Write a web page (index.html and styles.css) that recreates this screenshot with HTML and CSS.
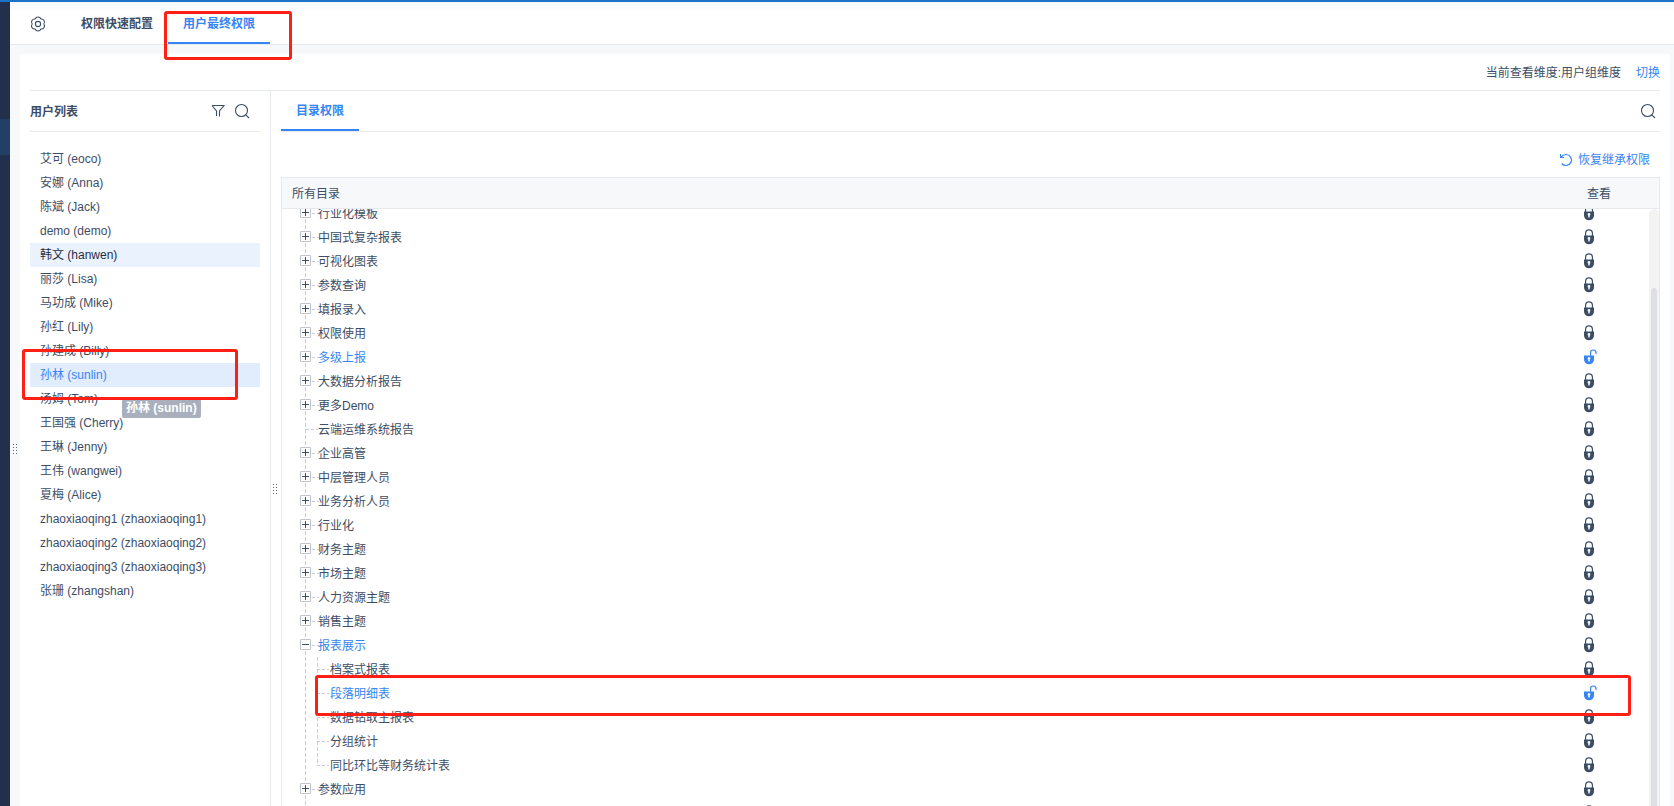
FILE: index.html
```
<!DOCTYPE html>
<html lang="zh-CN">
<head>
    <meta charset="utf-8">
    <title>用户最终权限</title>
    <link rel="stylesheet" href="styles.css">
</head>
<body>
    <svg class="symbols" aria-hidden="true">
        <symbol id="lock" viewBox="0 0 14 16">
            <path d="M3.600 8V4.200a3.400 3.400 0 0 1 6.800 0V8" fill="none" stroke="currentColor" stroke-width="1.200"/>
            <path fill="currentColor" fill-rule="evenodd" d="M2 6.500h10V10.500a5 4.800 0 0 1-10 0zM7 8a1.400 1.400 0 0 0-.7 2.600V12.500h1.400v-1.900A1.400 1.400 0 0 0 7 8z"/>
        </symbol>
        <symbol id="unlock" viewBox="0 0 15 16">
            <path d="M8.600 7V3.700a2.700 2.700 0 0 1 5.400 0V5" fill="none" stroke="currentColor" stroke-width="1.200"/>
            <path fill="currentColor" fill-rule="evenodd" d="M2 6.500h10V10.500a5 4.800 0 0 1-10 0zM7 8a1.400 1.400 0 0 0-.7 2.600V12.500h1.400v-1.900A1.400 1.400 0 0 0 7 8z"/>
        </symbol>
        <symbol id="search" viewBox="0 0 16 16">
            <circle cx="7.500" cy="7.500" r="6" fill="none" stroke="currentColor" stroke-width="1.100"/>
            <path d="M11.800 11.800L15 15" stroke="currentColor" stroke-width="1.100"/>
        </symbol>
        <symbol id="plus" viewBox="0 0 11 11">
            <path d="M.5 .5h10v10h-10z" fill="#fff" stroke="#c0c5ce"/>
            <path d="M2 5.500h7M5.500 2v7" stroke="#3d4d66"/>
        </symbol>
        <symbol id="minus" viewBox="0 0 11 11">
            <path d="M.5 .5h10v10h-10z" fill="#fff" stroke="#c0c5ce"/>
            <path d="M2 5.500h7" stroke="#3d4d66"/>
        </symbol>
        <symbol id="grip" viewBox="0 0 4 12">
            <path d="M.5 0v12M3.500 0v12" stroke="#5c6780" stroke-dasharray="1 2"/>
        </symbol>
    </svg>

    <div class="topline"></div>
    <div class="app">
        <aside class="rail"><div class="rail-active"></div></aside>
        <div class="workspace">
            <header class="header">
                <button class="icon-btn gear" aria-label="设置">
                    <svg viewBox="0 0 16 16" width="16" height="16" fill="none" stroke="currentColor" stroke-width="1.100">
                        <path d="M5.100 3A3.100 3.100 0 0 1 10.900 3A3.100 3.100 0 0 1 13.800 8A3.100 3.100 0 0 1 10.900 13A3.100 3.100 0 0 1 5.100 13A3.100 3.100 0 0 1 2.200 8A3.100 3.100 0 0 1 5.100 3z"/>
                        <circle cx="8" cy="8" r="2.600"/>
                    </svg>
                </button>
                <nav class="tabs">
                    <button class="tab">权限快速配置</button>
                    <button class="tab active">用户最终权限</button>
                    <div class="mark mark-tab"></div>
                </nav>
            </header>
            <div class="body">
                <div class="gutter"><svg class="grip"><use href="#grip"/></svg></div>
                <main class="card">
                    <div class="dimension">
                        <span>当前查看维度:用户组维度</span>
                        <a href="#">切换</a>
                    </div>
                    <div class="panels">
                        <section class="users">
                            <div class="users-head">
                                <h2>用户列表</h2>
                                <button class="icon-btn" aria-label="筛选">
                                    <svg viewBox="0 0 16 16" width="16" height="16" fill="none" stroke="currentColor" stroke-width="1.100"><path d="M2 2.500h12L9.500 8v5.500M2 2.500L6.500 8v5"/></svg>
                                </button>
                                <button class="icon-btn" aria-label="搜索"><svg width="16" height="16"><use href="#search"/></svg></button>
                            </div>
                            <ul class="user-list">
                                <li><button>艾可 (eoco)</button></li>
                                <li><button>安娜 (Anna)</button></li>
                                <li><button>陈斌 (Jack)</button></li>
                                <li><button>demo (demo)</button></li>
                                <li><button class="hover">韩文 (hanwen)</button></li>
                                <li><button>丽莎 (Lisa)</button></li>
                                <li><button>马功成 (Mike)</button></li>
                                <li><button>孙红 (Lily)</button></li>
                                <li><button>孙建成 (Billy)</button></li>
                                <li class="current">
                                    <button class="selected">孙林 (sunlin)</button>
                                    <div class="tooltip">孙林 (sunlin)</div>
                                    <div class="mark mark-user"></div>
                                </li>
                                <li><button>汤姆 (Tom)</button></li>
                                <li><button>王国强 (Cherry)</button></li>
                                <li><button>王琳 (Jenny)</button></li>
                                <li><button>王伟 (wangwei)</button></li>
                                <li><button>夏梅 (Alice)</button></li>
                                <li><button>zhaoxiaoqing1 (zhaoxiaoqing1)</button></li>
                                <li><button>zhaoxiaoqing2 (zhaoxiaoqing2)</button></li>
                                <li><button>zhaoxiaoqing3 (zhaoxiaoqing3)</button></li>
                                <li><button>张珊 (zhangshan)</button></li>
                            </ul>
                        </section>
                        <div class="splitter"><svg class="grip"><use href="#grip"/></svg></div>
                        <section class="perms">
                            <div class="perms-head">
                                <button class="tab active">目录权限</button>
                                <button class="icon-btn" aria-label="搜索"><svg width="16" height="16"><use href="#search"/></svg></button>
                            </div>
                            <div class="toolbar">
                                <button class="restore">
                                    <svg viewBox="0 0 14 14" width="14" height="14" fill="none" stroke="currentColor" stroke-width="1.200"><path d="M1.500 1v3.500H5M1.700 4.300C3 2.500 5 1.500 7 1.500a5.500 5.500 0 1 1-4.300 9"/></svg>
                                    恢复继承权限
                                </button>
                            </div>
                            <div class="grid">
                                <table class="grid-head">
                                    <tr><th>所有目录</th><th class="view">查看</th></tr>
                                </table>
                                <div class="grid-body">
                                    <table class="tree">
                                        <tr><td><div class="node"><button class="toggle"><svg><use href="#plus"/></svg></button>行业化模板</div></td><td class="view"><svg class="lock"><use href="#lock"/></svg></td></tr>
                                        <tr><td><div class="node"><button class="toggle"><svg><use href="#plus"/></svg></button>中国式复杂报表</div></td><td class="view"><svg class="lock"><use href="#lock"/></svg></td></tr>
                                        <tr><td><div class="node"><button class="toggle"><svg><use href="#plus"/></svg></button>可视化图表</div></td><td class="view"><svg class="lock"><use href="#lock"/></svg></td></tr>
                                        <tr><td><div class="node"><button class="toggle"><svg><use href="#plus"/></svg></button>参数查询</div></td><td class="view"><svg class="lock"><use href="#lock"/></svg></td></tr>
                                        <tr><td><div class="node"><button class="toggle"><svg><use href="#plus"/></svg></button>填报录入</div></td><td class="view"><svg class="lock"><use href="#lock"/></svg></td></tr>
                                        <tr><td><div class="node"><button class="toggle"><svg><use href="#plus"/></svg></button>权限使用</div></td><td class="view"><svg class="lock"><use href="#lock"/></svg></td></tr>
                                        <tr class="open"><td><div class="node"><button class="toggle"><svg><use href="#plus"/></svg></button>多级上报</div></td><td class="view"><svg class="lock unlocked"><use href="#unlock"/></svg></td></tr>
                                        <tr><td><div class="node"><button class="toggle"><svg><use href="#plus"/></svg></button>大数据分析报告</div></td><td class="view"><svg class="lock"><use href="#lock"/></svg></td></tr>
                                        <tr><td><div class="node"><button class="toggle"><svg><use href="#plus"/></svg></button>更多Demo</div></td><td class="view"><svg class="lock"><use href="#lock"/></svg></td></tr>
                                        <tr><td><div class="node leaf">云端运维系统报告</div></td><td class="view"><svg class="lock"><use href="#lock"/></svg></td></tr>
                                        <tr><td><div class="node"><button class="toggle"><svg><use href="#plus"/></svg></button>企业高管</div></td><td class="view"><svg class="lock"><use href="#lock"/></svg></td></tr>
                                        <tr><td><div class="node"><button class="toggle"><svg><use href="#plus"/></svg></button>中层管理人员</div></td><td class="view"><svg class="lock"><use href="#lock"/></svg></td></tr>
                                        <tr><td><div class="node"><button class="toggle"><svg><use href="#plus"/></svg></button>业务分析人员</div></td><td class="view"><svg class="lock"><use href="#lock"/></svg></td></tr>
                                        <tr><td><div class="node"><button class="toggle"><svg><use href="#plus"/></svg></button>行业化</div></td><td class="view"><svg class="lock"><use href="#lock"/></svg></td></tr>
                                        <tr><td><div class="node"><button class="toggle"><svg><use href="#plus"/></svg></button>财务主题</div></td><td class="view"><svg class="lock"><use href="#lock"/></svg></td></tr>
                                        <tr><td><div class="node"><button class="toggle"><svg><use href="#plus"/></svg></button>市场主题</div></td><td class="view"><svg class="lock"><use href="#lock"/></svg></td></tr>
                                        <tr><td><div class="node"><button class="toggle"><svg><use href="#plus"/></svg></button>人力资源主题</div></td><td class="view"><svg class="lock"><use href="#lock"/></svg></td></tr>
                                        <tr><td><div class="node"><button class="toggle"><svg><use href="#plus"/></svg></button>销售主题</div></td><td class="view"><svg class="lock"><use href="#lock"/></svg></td></tr>
                                        <tr><td><div class="node link"><button class="toggle"><svg><use href="#minus"/></svg></button>报表展示</div></td><td class="view"><svg class="lock"><use href="#lock"/></svg></td></tr>
                                        <tr><td><div class="node child">档案式报表</div></td><td class="view"><svg class="lock"><use href="#lock"/></svg></td></tr>
                                        <tr class="open marked"><td><div class="node child">段落明细表</div></td><td class="view"><svg class="lock unlocked"><use href="#unlock"/></svg><div class="mark mark-row"></div></td></tr>
                                        <tr><td><div class="node child">数据钻取主报表</div></td><td class="view"><svg class="lock"><use href="#lock"/></svg></td></tr>
                                        <tr><td><div class="node child">分组统计</div></td><td class="view"><svg class="lock"><use href="#lock"/></svg></td></tr>
                                        <tr><td><div class="node child last">同比环比等财务统计表</div></td><td class="view"><svg class="lock"><use href="#lock"/></svg></td></tr>
                                        <tr><td><div class="node"><button class="toggle"><svg><use href="#plus"/></svg></button>参数应用</div></td><td class="view"><svg class="lock"><use href="#lock"/></svg></td></tr>
                                        <tr><td><div class="node leaf"></div></td><td class="view"><svg class="lock"><use href="#lock"/></svg></td></tr>
                                    </table>
                                    <div class="scrollbar"><div class="thumb"></div></div>
                                </div>
                            </div>
                        </section>
                    </div>
                </main>
            </div>
        </div>
    </div>
</body>
</html>
```
FILE: styles.css
```
* {
    box-sizing: border-box;
}

body {
    margin: 0;
    height: 100vh;
    overflow: hidden;
    display: flex;
    flex-direction: column;
    font-family: "Liberation Sans", "Noto Sans CJK SC", sans-serif;
    font-size: 12px;
    line-height: 24px;
    color: #3d4d66;
    background-color: #f6f8fa;
}

button {
    font: inherit;
    color: inherit;
    background: none;
    border: none;
    padding: 0;
    cursor: pointer;
}

a {
    color: #3685f2;
    text-decoration: none;
}

svg {
    display: block;
}

.symbols {
    position: absolute;
    width: 0;
    height: 0;
}

.topline {
    height: 2px;
    flex: none;
    background-color: #1a73c7;
}

.app {
    flex: 1;
    min-height: 0;
    display: flex;
}

.rail {
    width: 10px;
    flex: none;
    padding-top: 117px;
    background-color: #22304d;
}

.rail-active {
    height: 36px;
    background-color: #233f66;
}

.workspace {
    flex: 1;
    min-width: 0;
    display: flex;
    flex-direction: column;
}

.header {
    height: 43px;
    flex: none;
    display: flex;
    align-items: center;
    padding-left: 20px;
    background: linear-gradient(#f6f8fa, #fff 10px);
    border-bottom: 1px solid #e6e9ed;
}

.icon-btn {
    width: 16px;
    height: 16px;
}

.gear {
    margin-top: 2px;
    margin-right: 20px;
}

.tabs {
    position: relative;
    display: flex;
    align-self: stretch;
}

.tab {
    padding: 2px 15px 0;
    font-weight: bold;
    border-bottom: 2px solid transparent;
}

.tabs .tab {
    padding-top: 4px;
}

.tab.active {
    color: #3685f2;
    border-bottom-color: #3685f2;
}

.body {
    flex: 1;
    min-height: 0;
    display: flex;
    padding: 9px 4px 0 0;
}

.gutter {
    width: 10px;
    flex: none;
    display: flex;
    align-items: center;
    justify-content: center;
    padding-top: 40px;
}

.grip {
    width: 4px;
    height: 12px;
}

.card {
    flex: 1;
    min-width: 0;
    display: flex;
    flex-direction: column;
    padding: 0 10px;
    background-color: #fff;
}

.dimension {
    height: 37px;
    flex: none;
    display: flex;
    align-items: center;
    justify-content: flex-end;
    gap: 15px;
    padding-top: 2px;
    border-bottom: 1px solid #e6e9ed;
}

.panels {
    flex: 1;
    min-height: 0;
    display: flex;
}

.users {
    width: 241px;
    flex: none;
    padding-right: 10px;
    border-right: 1px solid #e6e9ed;
}

.users-head {
    height: 41px;
    display: flex;
    align-items: center;
    gap: 8px;
    padding-right: 10px;
    border-bottom: 1px solid #e6e9ed;
}

.users-head h2 {
    flex: 1;
    margin: 0;
    padding-top: 2px;
    font-size: 12px;
}

.user-list {
    list-style: none;
    margin: 15px 0 0;
    padding: 0;
}

.user-list button {
    display: block;
    width: 100%;
    height: 24px;
    padding-left: 10px;
    text-align: left;
}

.user-list .hover {
    color: #1f2d45;
    background-color: #eaf2fe;
}

.user-list .selected {
    color: #3685f2;
    background-color: #e1ecfd;
}

.current {
    position: relative;
}

.tooltip {
    position: absolute;
    left: 92px;
    top: 36px;
    padding: 0 4px;
    line-height: 19px;
    font-weight: bold;
    color: #fff;
    background-color: #a9afbc;
    border-radius: 2px;
    white-space: nowrap;
}

.mark {
    position: absolute;
    border: 3px solid #ff1f14;
    border-radius: 3px;
    pointer-events: none;
}

.mark-tab {
    left: 98px;
    top: 9px;
    width: 128px;
    height: 49px;
}

.mark-user {
    left: -8px;
    top: -14px;
    width: 216px;
    height: 51px;
}

.mark-row {
    left: 33px;
    right: 18px;
    top: -6px;
    height: 41px;
}

.splitter {
    width: 10px;
    flex: none;
    display: flex;
    align-items: center;
    padding-top: 82px;
    padding-left: 2px;
}

.perms {
    flex: 1;
    min-width: 0;
    display: flex;
    flex-direction: column;
}

.perms-head {
    height: 41px;
    flex: none;
    display: flex;
    align-items: center;
    justify-content: space-between;
    padding-right: 4px;
    border-bottom: 1px solid #e6e9ed;
}

.perms-head .tab {
    align-self: stretch;
}

.toolbar {
    height: 45px;
    flex: none;
    display: flex;
    justify-content: flex-end;
    align-items: flex-end;
    padding: 0 10px 5px 0;
}

.restore {
    display: flex;
    align-items: center;
    gap: 5px;
    color: #3685f2;
}

.grid {
    flex: 1;
    min-height: 0;
    display: flex;
    flex-direction: column;
    border: 1px solid #e6e9ed;
    border-bottom: none;
}

table {
    width: 100%;
    border-collapse: collapse;
    table-layout: fixed;
}

th,
td {
    padding: 0;
    text-align: left;
    font-weight: normal;
}

.grid-head {
    flex: none;
    background-color: #f6f8fa;
    border-bottom: 1px solid #e6e9ed;
}

.grid-head th {
    height: 30px;
    padding-top: 2px;
    padding-left: 10px;
}

.grid-head .view {
    width: 82px;
}

.grid-body {
    flex: 1;
    min-height: 0;
    display: flex;
    align-items: flex-start;
    overflow: hidden;
}

/* list is scrolled part of a row under the header */
.tree {
    flex: 1;
    margin-top: -8px;
}

.tree tr {
    height: 24px;
}

.tree .view {
    width: 67px;
}

.marked {
    position: relative;
}

.open,
.link {
    color: #3685f2;
}

.node {
    height: 24px;
    display: flex;
    align-items: center;
    padding-top: 2px;
    padding-left: 18px;
    background-image:
        repeating-linear-gradient(#c8ccd4 0 4px, transparent 4px 6px),
        repeating-linear-gradient(90deg, #c8ccd4 0 3px, transparent 3px 5px);
    background-size: 1px 24px, 7px 1px;
    background-position: 23px 0, 30px 12px;
    background-repeat: no-repeat;
}

.leaf {
    padding-left: 36px;
    background-size: 1px 24px, 12px 1px;
    background-position: 23px 0, 24px 12px;
}

.child {
    padding-left: 48px;
    background-image:
        repeating-linear-gradient(#c8ccd4 0 4px, transparent 4px 6px),
        repeating-linear-gradient(90deg, #c8ccd4 0 3px, transparent 3px 5px),
        repeating-linear-gradient(#c8ccd4 0 4px, transparent 4px 6px);
    background-size: 1px 24px, 12px 1px, 1px 24px;
    background-position: 23px 0, 35px 12px, 35px 0;
}

.child.last {
    background-size: 1px 24px, 12px 1px, 1px 12px;
}

.toggle {
    width: 11px;
    height: 11px;
    margin-right: 7px;
    margin-bottom: 2px;
}

.toggle svg {
    width: 11px;
    height: 11px;
}

.lock {
    width: 14px;
    height: 16px;
}

.unlocked {
    width: 15px;
}

.scrollbar {
    width: 10px;
    align-self: stretch;
    padding: 79px 2px 0;
    background-color: #f3f3f4;
    border-radius: 5px 5px 0 0;
}

.thumb {
    height: 100%;
    background-color: #dddfe3;
    border-radius: 3px 3px 0 0;
}
```
